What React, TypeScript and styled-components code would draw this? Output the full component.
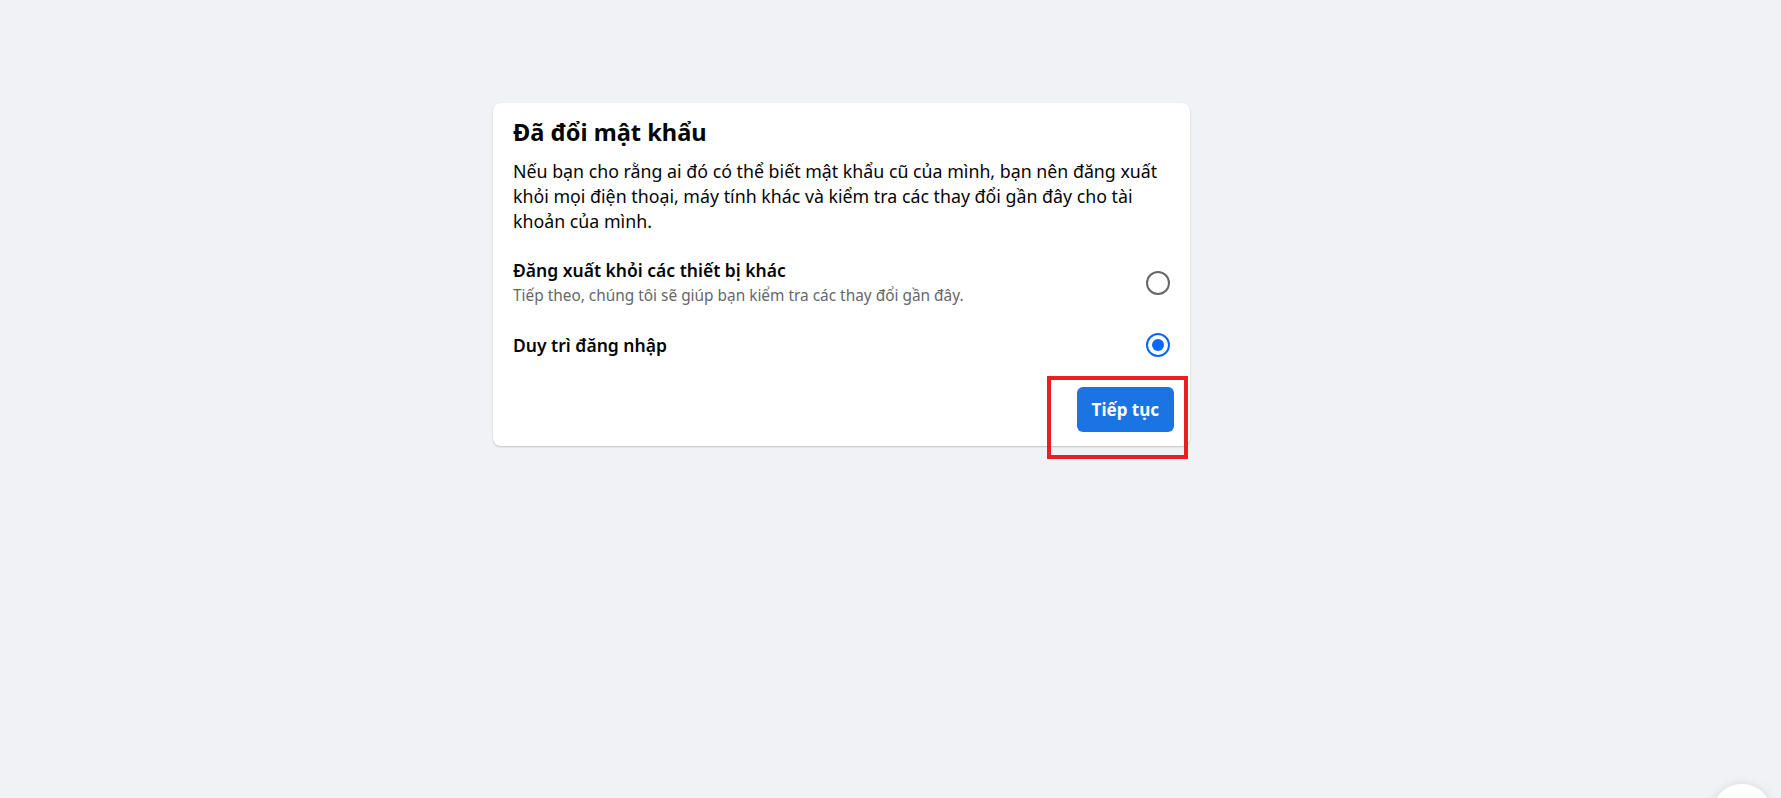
import React, { useState } from "react";
import styled, { createGlobalStyle } from "styled-components";

const GlobalStyle = createGlobalStyle`
  html, body {
    margin: 0;
    padding: 0;
    background: #f0f2f5;
    font-family: "Noto Sans", "Open Sans", Arial, sans-serif;
    color: #050505;
  }
`;

type Choice = "logout" | "stay";

const options: { id: Choice; title: string; hint?: string }[] = [
  {
    id: "logout",
    title: "Đăng xuất khỏi các thiết bị khác",
    hint: "Tiếp theo, chúng tôi sẽ giúp bạn kiểm tra các thay đổi gần đây.",
  },
  { id: "stay", title: "Duy trì đăng nhập" },
];

const App: React.FC = () => {
  const [choice, setChoice] = useState<Choice>("stay");

  return (
    <Page>
      <GlobalStyle />
      <Card>
        <Title>Đã đổi mật khẩu</Title>
        <Intro>
          Nếu bạn cho rằng ai đó có thể biết mật khẩu cũ của mình, bạn nên
          đăng xuất khỏi mọi điện thoại, máy tính khác và kiểm tra các thay
          đổi gần đây cho tài khoản của mình.
        </Intro>
        <OptionList>
          {options.map((opt) => (
            <OptionRow key={opt.id} onClick={() => setChoice(opt.id)}>
              <OptionText>
                <OptionTitle>{opt.title}</OptionTitle>
                {opt.hint && <OptionHint>{opt.hint}</OptionHint>}
              </OptionText>
              <Radio $checked={choice === opt.id} />
            </OptionRow>
          ))}
        </OptionList>
        <Footer>
          <ContinueButton>Tiếp tục</ContinueButton>
          <Highlight />
        </Footer>
      </Card>
      <FloatingBubble />
    </Page>
  );
};

const Page = styled.div`
  min-height: 798px;
  padding: 103px 0 0 493px;
  box-sizing: border-box;
`;

const Card = styled.div`
  width: 697px;
  box-sizing: border-box;
  background: #fff;
  border-radius: 8px;
  box-shadow: 0 1px 2px rgba(0, 0, 0, 0.2);
  padding: 14px 16px 14px 20px;
`;

const Title = styled.h2`
  margin: 0;
  font-size: 23.6px;
  line-height: 30px;
  font-weight: 700;
`;

const Intro = styled.p`
  margin: 12px 0 0;
  font-size: 17.8px;
  line-height: 25px;
  font-weight: 400;
`;

const OptionList = styled.div`
  display: flex;
  flex-direction: column;
  gap: 27px;
  margin-top: 25px;
`;

const OptionRow = styled.div`
  display: flex;
  align-items: center;
  justify-content: space-between;
  cursor: pointer;
`;

const OptionText = styled.div`
  display: flex;
  flex-direction: column;
  gap: 5px;
`;

const OptionTitle = styled.span`
  font-size: 17.5px;
  line-height: 22px;
  font-weight: 600;
`;

const OptionHint = styled.span`
  font-size: 15.4px;
  line-height: 20px;
  color: #65676b;
`;

const Radio = styled.span<{ $checked: boolean }>`
  flex: none;
  width: 24px;
  height: 24px;
  margin-right: 4px;
  box-sizing: border-box;
  border-radius: 50%;
  border: 2px solid ${(p) => (p.$checked ? "#0866ff" : "#65676b")};
  display: flex;
  align-items: center;
  justify-content: center;

  &::after {
    content: "";
    width: 12px;
    height: 12px;
    border-radius: 50%;
    background: ${(p) => (p.$checked ? "#0866ff" : "transparent")};
  }
`;

const Footer = styled.div`
  position: relative;
  display: flex;
  justify-content: flex-end;
  margin-top: 30px;
`;

const ContinueButton = styled.button`
  height: 45px;
  padding: 0 15px;
  border: none;
  border-radius: 6px;
  background: #1b74e4;
  color: #fff;
  font-family: inherit;
  font-size: 17px;
  font-weight: 700;
  cursor: pointer;
`;

const Highlight = styled.div`
  position: absolute;
  right: -14px;
  top: -11px;
  width: 141px;
  height: 83px;
  box-sizing: border-box;
  border: 4px solid #ee1c25;
  pointer-events: none;
`;

const FloatingBubble = styled.div`
  position: fixed;
  left: 1712px;
  top: 784px;
  width: 60px;
  height: 60px;
  border-radius: 50%;
  background: #fff;
  box-shadow: 0 2px 12px rgba(0, 0, 0, 0.15);
`;

export default App;
